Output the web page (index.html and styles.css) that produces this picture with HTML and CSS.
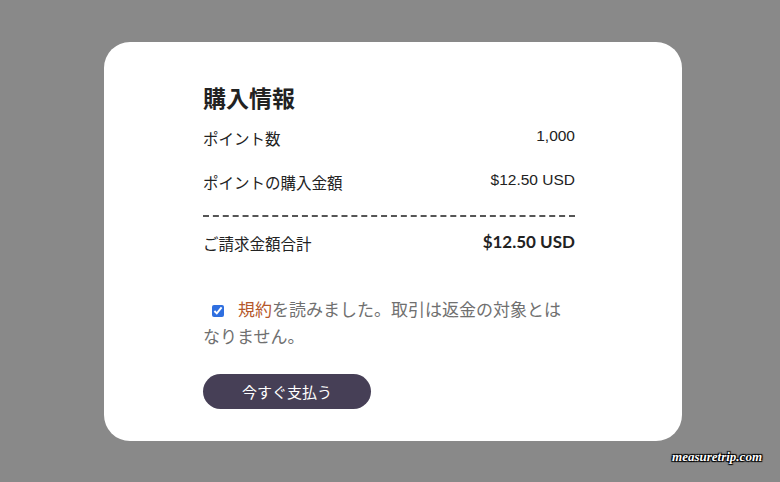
FILE: index.html
```html
<!DOCTYPE html>
<html lang="ja">
<head>
<meta charset="utf-8">
<link rel="stylesheet" href="styles.css">
</head>
<body>
<div class="card">
  <div class="inner">
    <h1 class="title">購入情報</h1>
    <div class="row row-first">
      <span class="label">ポイント数</span>
      <span class="value">1,000</span>
    </div>
    <div class="row row-second">
      <span class="label">ポイントの購入金額</span>
      <span class="value">$12.50 USD</span>
    </div>
    <div class="divider"></div>
    <div class="row row-total">
      <span class="label">ご請求金額合計</span>
      <span class="total">$12.50 USD</span>
    </div>
    <p class="agree"><input type="checkbox" class="check" checked><a class="terms">規約</a>を読みました。取引は返金の対象とはなりません。</p>
    <button class="pay">今すぐ支払う</button>
  </div>
</div>
<div class="watermark">measuretrip.com</div>
</body>
</html>
```
FILE: styles.css
```css
html, body {
  margin: 0;
  padding: 0;
}
body {
  background: #898989;
  width: 780px;
  height: 482px;
  overflow: hidden;
  position: relative;
  font-family: "Liberation Sans", "Noto Sans CJK JP", sans-serif;
}
.card {
  margin: 42px 0 0 104px;
  width: 578px;
  height: 399px;
  background: #ffffff;
  border-radius: 26px;
  box-sizing: border-box;
  padding: 38px 107px 0 99px;
}
.inner {
  display: flex;
  flex-direction: column;
}
.title {
  margin: 0;
  font-family: "Noto Sans CJK JP", sans-serif;
  font-size: 23px;
  font-weight: 700;
  line-height: 34px;
  color: #222;
}
.row {
  display: flex;
  justify-content: space-between;
  align-items: center;
  height: 24px;
}
.row-first {
  margin-top: 10px;
}
.row-second {
  margin-top: 20px;
}
.label {
  font-family: "Noto Sans CJK JP", sans-serif;
  font-size: 15.5px;
  color: #222;
  position: relative;
  top: 2px;
}
.value {
  font-size: 15.5px;
  color: #222;
}
.divider {
  margin-top: 23px;
  border-top: 2px dashed #555;
}
.row-total {
  margin-top: 12px;
}
.total {
  font-family: Lato, "Liberation Sans", sans-serif;
  font-weight: 700;
  font-size: 17px;
  color: #222;
}
.agree {
  margin: 42px 0 0 0;
  font-family: "Noto Sans CJK JP", sans-serif;
  font-size: 17px;
  line-height: 27px;
  color: #707070;
}
.check {
  width: 12px;
  height: 12px;
  margin: 0 14px 0 9px;
  vertical-align: -1px;
  accent-color: #2f6fe0;
}
.terms {
  color: #b5582b;
}
.pay {
  margin-top: 25px;
  width: 168px;
  height: 35px;
  border: none;
  border-radius: 18px;
  background: #463f56;
  color: #ffffff;
  font-family: "Noto Sans CJK JP", sans-serif;
  font-size: 15px;
  padding: 0;
}
.watermark {
  position: absolute;
  right: 18px;
  top: 449px;
  font-family: "Liberation Serif", serif;
  font-style: italic;
  font-weight: 700;
  font-size: 13px;
  color: #ffffff;
  text-shadow: 1px 1px 1px #000, -1px -1px 1px #000, 1px -1px 1px #000, -1px 1px 1px #000;
}
```
